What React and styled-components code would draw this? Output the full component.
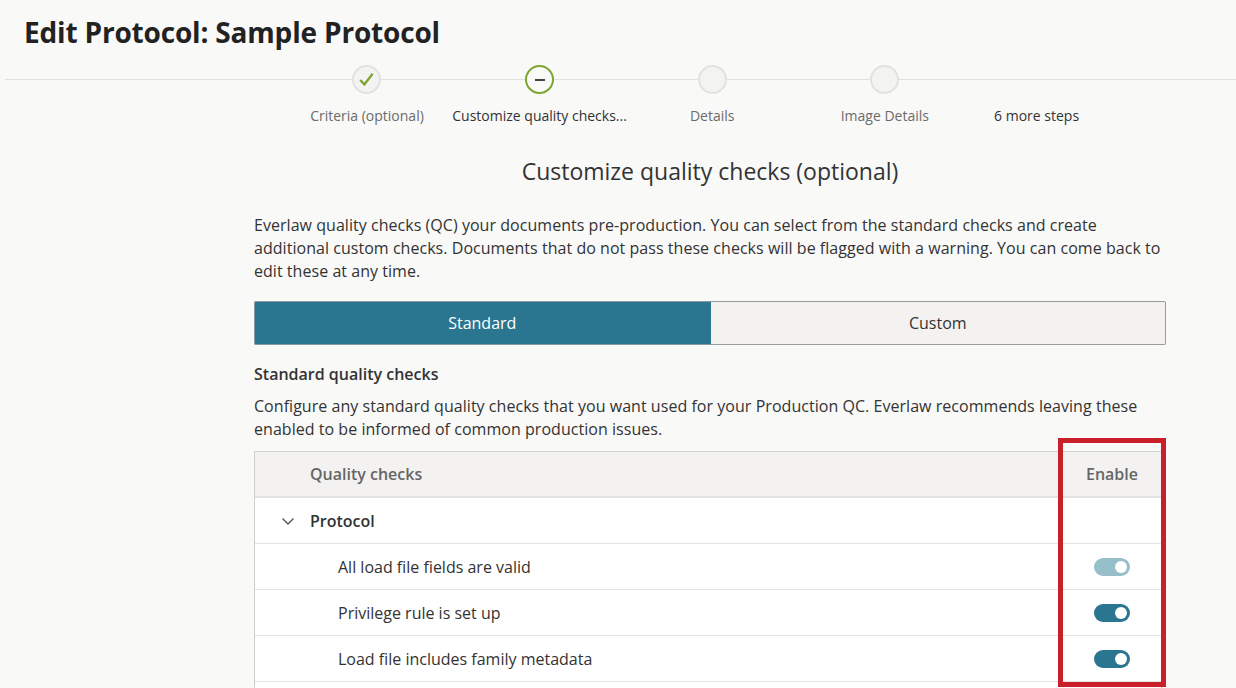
import React, { useState } from 'react';
import styled, { createGlobalStyle } from 'styled-components';

const GlobalStyle = createGlobalStyle`
  html, body {
    margin: 0;
    padding: 0;
    background: #f9f9f8;
    font-family: "Open Sans", "Noto Sans", sans-serif;
    color: #333;
  }
  * { box-sizing: border-box; }
`;

const Page = styled.div`
  width: 1236px;
  height: 688px;
  overflow: hidden;
  background: #f9f9f8;
`;

const Title = styled.h1`
  margin: 0;
  padding: 13px 24px 0;
  font-size: 28px;
  line-height: 38px;
  font-weight: 700;
  letter-spacing: -0.18px;
  color: #222;
`;

const Stepper = styled.div`
  position: relative;
  display: flex;
  margin: 15px 0 0 5px;
  padding-left: 275.7px;

  &::before {
    content: '';
    position: absolute;
    left: 0;
    right: 0;
    top: 13px;
    height: 1px;
    background: #e0e0df;
  }
`;

const Step = styled.div`
  position: relative;
  width: ${(p) => (p.$narrow ? 131 : 172.6)}px;
  flex-shrink: 0;
  display: flex;
  flex-direction: column;
  align-items: center;
`;

const Circle = styled.div`
  width: 29px;
  height: 29px;
  margin-top: -1px;
  border-radius: 50%;
  border: 2px solid ${(p) => (p.$active ? '#7ca630' : '#e2e2e1')};
  background: ${(p) => (p.$active ? '#fafaf9' : '#f3f3f2')};
  display: flex;
  align-items: center;
  justify-content: center;
  visibility: ${(p) => (p.$hidden ? 'hidden' : 'visible')};
`;

const Minus = styled.span`
  width: 10px;
  height: 2px;
  background: #444;
`;

const StepLabel = styled.div`
  margin-top: 12px;
  font-size: 14px;
  line-height: 20px;
  white-space: nowrap;
  color: ${(p) => (p.$dark ? '#333' : '#6b6b6b')};
`;

const Content = styled.div`
  width: 912px;
  margin-left: 254px;
`;

const Heading = styled.h2`
  margin: 30px 0 0;
  text-align: center;
  font-size: 23px;
  line-height: 31px;
  font-weight: 400;
  color: #333;
`;

const Text = styled.p`
  margin: ${(p) => p.$mt || 0}px 0 0;
  font-size: 16px;
  line-height: 23px;
  letter-spacing: 0.04px;
  color: #333;
`;

const Tabs = styled.div`
  display: flex;
  margin-top: 18px;
  height: 44px;
`;

const Tab = styled.button`
  flex: 1 1 0;
  font-family: inherit;
  font-size: 16px;
  border: 1px solid #9a9a9a;
  border-left-width: ${(p) => (p.$active ? 1 : 0)}px;
  background: ${(p) => (p.$active ? '#2a7690' : '#f3f2f1')};
  color: ${(p) => (p.$active ? '#fff' : '#333')};
  border-radius: ${(p) => (p.$active ? '2px 0 0 2px' : '0 2px 2px 0')};
  ${(p) => p.$active && 'border-color: #8a9aa0 #2a7690 #8a9aa0 #8a9aa0;'}
  cursor: pointer;
`;

const SubHeading = styled.h3`
  margin: 18px 0 0;
  font-size: 16px;
  line-height: 23px;
  font-weight: 600;
  color: #333;
`;

const TableWrap = styled.div`
  position: relative;
  margin-top: 10px;
  width: 908px;
`;

const Table = styled.div`
  border: 1px solid #cfcfce;
  border-bottom: none;
  background: #fff;
`;

const HeadRow = styled.div`
  display: flex;
  align-items: center;
  height: 46px;
  background: #f3f2f1;
  border-bottom: 2px solid #e3e3e2;
  font-size: 16px;
  color: #666;
`;

const Row = styled.div`
  display: flex;
  align-items: center;
  height: 46px;
  border-bottom: 1px solid #e3e3e2;
  font-size: 16px;
  color: #333;
`;

const NameCell = styled.div`
  flex: 1;
  display: flex;
  align-items: center;
  padding-left: ${(p) => p.$indent}px;
  font-weight: ${(p) => (p.$bold ? 600 : 400)};
`;

const EnableCell = styled.div`
  width: 98px;
  display: flex;
  justify-content: center;
  font-weight: 600;
`;

const Chevron = styled.svg`
  width: 14px;
  height: 14px;
  margin-right: 15px;
`;

const Toggle = styled.button`
  width: 36px;
  height: 18px;
  padding: 0;
  border: none;
  border-radius: 9px;
  background: ${(p) => (p.$disabled ? '#97bfca' : '#2a7690')};
  position: relative;
  cursor: ${(p) => (p.$disabled ? 'default' : 'pointer')};

  &::after {
    content: '';
    position: absolute;
    top: 3px;
    left: ${(p) => (p.$on ? 21 : 3)}px;
    width: 12px;
    height: 12px;
    border-radius: 50%;
    background: #fff;
  }
`;

const Highlight = styled.div`
  position: absolute;
  left: 804px;
  top: -13px;
  width: 108px;
  height: 249px;
  border: 5px solid #c81f2b;
  pointer-events: none;
`;

const steps = [
  { label: 'Criteria (optional)', state: 'done' },
  { label: 'Customize quality checks...', state: 'active' },
  { label: 'Details' },
  { label: 'Image Details' },
  { label: '6 more steps', state: 'more' },
];

const initialChecks = [
  { name: 'All load file fields are valid', on: true, disabled: true },
  { name: 'Privilege rule is set up', on: true },
  { name: 'Load file includes family metadata', on: true },
];

export default function App() {
  const [tab, setTab] = useState('standard');
  const [checks, setChecks] = useState(initialChecks);

  const flip = (i) => {
    if (checks[i].disabled) return;
    setChecks(checks.map((c, j) => (j === i ? { ...c, on: !c.on } : c)));
  };

  return (
    <Page>
      <GlobalStyle />
      <Title>Edit Protocol: Sample Protocol</Title>

      <Stepper>
        {steps.map((s) => (
          <Step key={s.label} $narrow={s.state === 'more'}>
            <Circle $active={s.state === 'active'} $hidden={s.state === 'more'}>
              {s.state === 'done' && (
                <svg width="17" height="17" viewBox="0 0 17 17">
                  <path d="M2.2 9 L6.4 13.4 L14.6 2.8" fill="none" stroke="#7ca630" strokeWidth="2.4" />
                </svg>
              )}
              {s.state === 'active' && <Minus />}
            </Circle>
            <StepLabel $dark={s.state === 'active' || s.state === 'more'}>{s.label}</StepLabel>
          </Step>
        ))}
      </Stepper>

      <Content>
        <Heading>Customize quality checks (optional)</Heading>
        <Text $mt={27}>
          Everlaw quality checks (QC) your documents pre-production. You can select from the standard checks and create
          additional custom checks. Documents that do not pass these checks will be flagged with a warning. You can come back to
          edit these at any time.
        </Text>

        <Tabs>
          <Tab $active={tab === 'standard'} onClick={() => setTab('standard')}>Standard</Tab>
          <Tab $active={tab === 'custom'} onClick={() => setTab('custom')}>Custom</Tab>
        </Tabs>

        <SubHeading>Standard quality checks</SubHeading>
        <Text $mt={9}>
          Configure any standard quality checks that you want used for your Production QC. Everlaw recommends leaving these
          enabled to be informed of common production issues.
        </Text>

        <TableWrap>
          <Table>
            <HeadRow>
              <NameCell $indent={55} $bold>Quality checks</NameCell>
              <EnableCell>Enable</EnableCell>
            </HeadRow>
            <Row>
              <NameCell $indent={26} $bold>
                <Chevron viewBox="0 0 14 14">
                  <path d="M1.5 4.5 L7 10 L12.5 4.5" fill="none" stroke="#555" strokeWidth="1.4" />
                </Chevron>
                Protocol
              </NameCell>
              <EnableCell />
            </Row>
            {checks.map((c, i) => (
              <Row key={c.name}>
                <NameCell $indent={83}>{c.name}</NameCell>
                <EnableCell>
                  <Toggle $on={c.on} $disabled={c.disabled} onClick={() => flip(i)} />
                </EnableCell>
              </Row>
            ))}
            <Row />
          </Table>
          <Highlight />
        </TableWrap>
      </Content>
    </Page>
  );
}
